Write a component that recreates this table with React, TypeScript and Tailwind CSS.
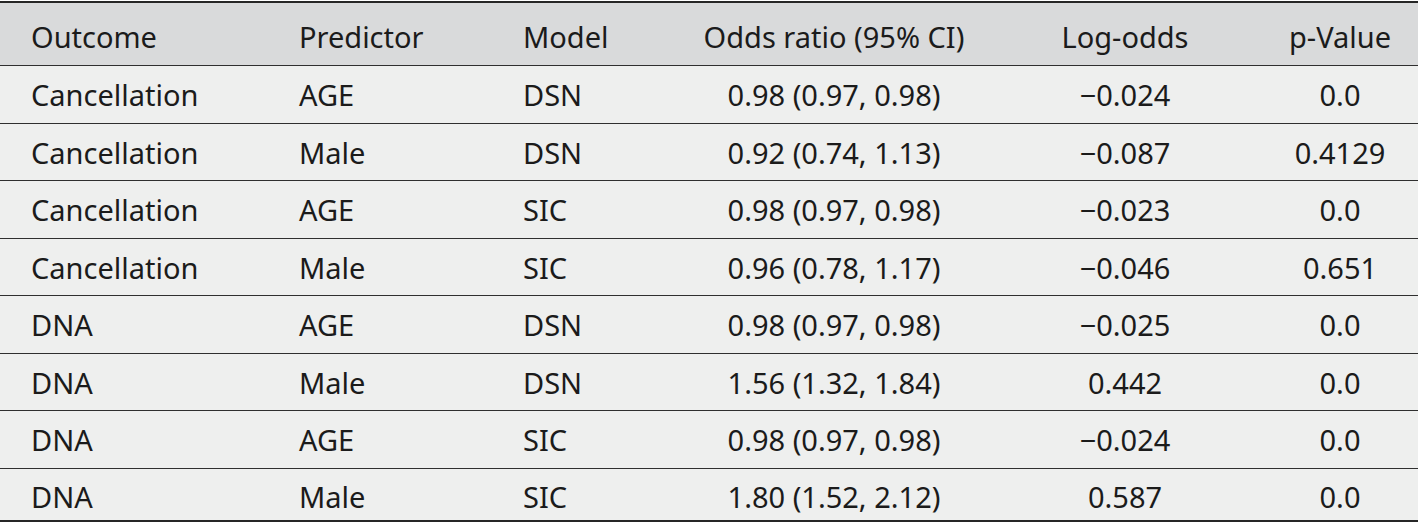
const rows = [
  ['Cancellation', 'AGE', 'DSN', '0.98 (0.97, 0.98)', '\u22120.024', '0.0'],
  ['Cancellation', 'Male', 'DSN', '0.92 (0.74, 1.13)', '\u22120.087', '0.4129'],
  ['Cancellation', 'AGE', 'SIC', '0.98 (0.97, 0.98)', '\u22120.023', '0.0'],
  ['Cancellation', 'Male', 'SIC', '0.96 (0.78, 1.17)', '\u22120.046', '0.651'],
  ['DNA', 'AGE', 'DSN', '0.98 (0.97, 0.98)', '\u22120.025', '0.0'],
  ['DNA', 'Male', 'DSN', '1.56 (1.32, 1.84)', '0.442', '0.0'],
  ['DNA', 'AGE', 'SIC', '0.98 (0.97, 0.98)', '\u22120.024', '0.0'],
  ['DNA', 'Male', 'SIC', '1.80 (1.52, 2.12)', '0.587', '0.0'],
];

const headers = ['Outcome', 'Predictor', 'Model', 'Odds ratio (95% CI)', 'Log-odds', 'p-Value'];

const grid = 'grid grid-cols-[268px_224px_188px_308px_274px_156px]';

// first three columns sit left with padding, numeric ones are centred
const cellCls = (i: number) =>
  i < 3
    ? 'pl-[31px] flex items-center whitespace-nowrap'
    : 'flex items-center justify-center whitespace-nowrap';

const rowHeight = (i: number, last: boolean) =>
  last ? 'h-[51px]' : i % 2 === 0 ? 'h-[58px]' : 'h-[57px]';

export default function App() {
  return (
    <div className="bg-white pt-px w-[1418px] font-['Noto_Sans',sans-serif] text-[#1b1b1b] text-[29px] leading-none">
      <div className="border-t-2 border-b-2 border-[#262626]">
        <div className={`${grid} h-[63px] bg-[#d9dadb] border-b border-[#2f2f2f]`}>
          {headers.map((h, i) => (
            <div key={h} className={`${cellCls(i)} pt-[4px]`}>
              {h}
            </div>
          ))}
        </div>
        {rows.map((r, ri) => {
          const last = ri === rows.length - 1;
          return (
            <div
              key={ri}
              className={`${grid} bg-[#eeefee] ${rowHeight(ri, last)} ${last ? '' : 'border-b border-[#2f2f2f]'}`}
            >
              {r.map((c, ci) => (
                <div key={ci} className={`${cellCls(ci)} ${last ? 'pt-[3px]' : ''}`}>
                  {c}
                </div>
              ))}
            </div>
          );
        })}
      </div>
    </div>
  );
}
